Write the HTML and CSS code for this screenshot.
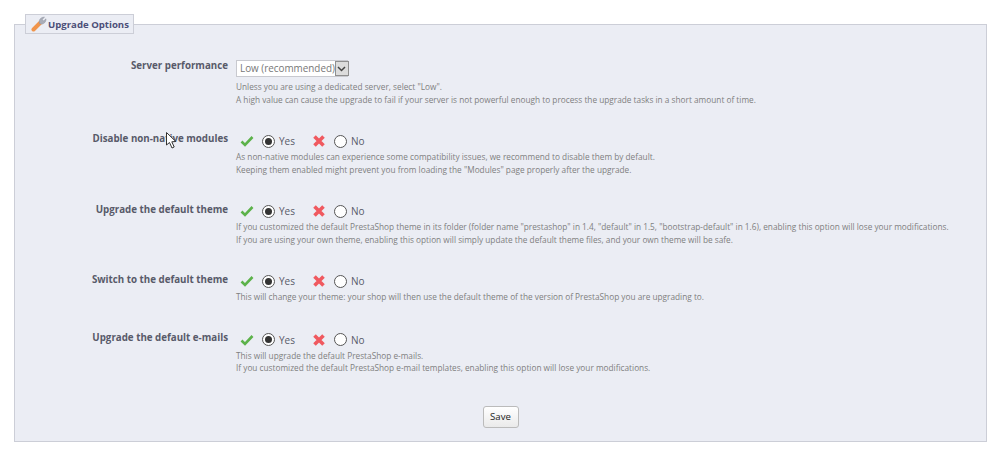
FILE: index.html
```html
<!DOCTYPE html>
<html lang="en">
<head>
    <meta charset="UTF-8">
    <title>Upgrade Options</title>
    <link rel="stylesheet" href="styles.css">
</head>
<body>
    <form class="options-form">
        <fieldset class="options">
            <legend class="options-title">
                <svg class="wrench" viewBox="0 0 16 16" width="16" height="16">
                    <path d="M2.5 13.5 L9 7" stroke="#f0954c" stroke-width="4" stroke-linecap="round"/>
                    <path d="M8.5 7.5 C7.5 3.5 10 1 13.5 1.2 L11.2 3.4 L12.6 5 L15 2.8 C15.2 6 12.5 8.6 9.8 8 Z" fill="#a9adb8" stroke="#8b8f9a" stroke-width=".5"/>
                </svg>
                Upgrade Options
            </legend>

            <div class="row row-select">
                <label class="row-label">Server performance</label>
                <div class="row-field">
                    <div class="select">
                        <span class="select-value">Low (recommended)</span>
                        <span class="select-arrow">
                            <svg viewBox="0 0 9 6" width="9" height="6"><path d="M1 1 L4.5 4.5 L8 1" fill="none" stroke="#444" stroke-width="1.5"/></svg>
                        </span>
                    </div>
                    <p class="help">Unless you are using a dedicated server, select "Low".<br>A high value can cause the upgrade to fail if your server is not powerful enough to process the upgrade tasks in a short amount of time.</p>
                </div>
            </div>

            <div class="row row-modules">
                <label class="row-label">Disable non-native modules</label>
                <div class="row-field">
                    <div class="switch">
                        <svg class="icon-yes" viewBox="0 0 14 14" width="14" height="14"><path d="M1.5 7.5 L5 11 L12.5 3" fill="none" stroke="#5cb24a" stroke-width="2.6"/></svg>
                        <span class="radio radio-on"></span><span class="switch-text">Yes</span>
                        <svg class="icon-no" viewBox="0 0 14 14" width="14" height="14"><path d="M2.5 2.5 L11.5 11.5 M11.5 2.5 L2.5 11.5" fill="none" stroke="#f0595f" stroke-width="3.6"/></svg>
                        <span class="radio"></span><span class="switch-text">No</span>
                    </div>
                    <p class="help">As non-native modules can experience some compatibility issues, we recommend to disable them by default.<br>Keeping them enabled might prevent you from loading the "Modules" page properly after the upgrade.</p>
                </div>
            </div>

            <div class="row row-theme">
                <label class="row-label">Upgrade the default theme</label>
                <div class="row-field">
                    <div class="switch">
                        <svg class="icon-yes" viewBox="0 0 14 14" width="14" height="14"><path d="M1.5 7.5 L5 11 L12.5 3" fill="none" stroke="#5cb24a" stroke-width="2.6"/></svg>
                        <span class="radio radio-on"></span><span class="switch-text">Yes</span>
                        <svg class="icon-no" viewBox="0 0 14 14" width="14" height="14"><path d="M2.5 2.5 L11.5 11.5 M11.5 2.5 L2.5 11.5" fill="none" stroke="#f0595f" stroke-width="3.6"/></svg>
                        <span class="radio"></span><span class="switch-text">No</span>
                    </div>
                    <p class="help">If you customized the default PrestaShop theme in its folder (folder name "prestashop" in 1.4, "default" in 1.5, "bootstrap-default" in 1.6), enabling this option will lose your modifications.<br>If you are using your own theme, enabling this option will simply update the default theme files, and your own theme will be safe.</p>
                </div>
            </div>

            <div class="row row-switch">
                <label class="row-label">Switch to the default theme</label>
                <div class="row-field">
                    <div class="switch">
                        <svg class="icon-yes" viewBox="0 0 14 14" width="14" height="14"><path d="M1.5 7.5 L5 11 L12.5 3" fill="none" stroke="#5cb24a" stroke-width="2.6"/></svg>
                        <span class="radio radio-on"></span><span class="switch-text">Yes</span>
                        <svg class="icon-no" viewBox="0 0 14 14" width="14" height="14"><path d="M2.5 2.5 L11.5 11.5 M11.5 2.5 L2.5 11.5" fill="none" stroke="#f0595f" stroke-width="3.6"/></svg>
                        <span class="radio"></span><span class="switch-text">No</span>
                    </div>
                    <p class="help">This will change your theme: your shop will then use the default theme of the version of PrestaShop you are upgrading to.</p>
                </div>
            </div>

            <div class="row row-mails">
                <label class="row-label">Upgrade the default e-mails</label>
                <div class="row-field">
                    <div class="switch">
                        <svg class="icon-yes" viewBox="0 0 14 14" width="14" height="14"><path d="M1.5 7.5 L5 11 L12.5 3" fill="none" stroke="#5cb24a" stroke-width="2.6"/></svg>
                        <span class="radio radio-on"></span><span class="switch-text">Yes</span>
                        <svg class="icon-no" viewBox="0 0 14 14" width="14" height="14"><path d="M2.5 2.5 L11.5 11.5 M11.5 2.5 L2.5 11.5" fill="none" stroke="#f0595f" stroke-width="3.6"/></svg>
                        <span class="radio"></span><span class="switch-text">No</span>
                    </div>
                    <p class="help">This will upgrade the default PrestaShop e-mails.<br>If you customized the default PrestaShop e-mail templates, enabling this option will lose your modifications.</p>
                </div>
            </div>

            <div class="actions">
                <button type="button" class="save-button">Save</button>
            </div>
        </fieldset>
    </form>

    <!-- mouse pointer caught in the screenshot -->
    <svg class="pointer" viewBox="0 0 11 17" width="11" height="17">
        <path d="M.5 .5 V13 L3.5 10.5 L6 16 L8.2 15 L5.8 9.8 L9.8 9.5 Z" fill="#fff" stroke="#333" stroke-width="1"/>
    </svg>
</body>
</html>
```

FILE: styles.css
```css
body {
    margin: 0;
    background: #fff;
    font-family: "Open Sans", "Liberation Sans", sans-serif;
    font-size: 10px;
    color: #585a69;
}

.options-form {
    padding: 14px 13px 13px 14px;
}

.options {
    margin: 0;
    padding: 0 0 13px;
    background: #ebedf4;
    border: 1px solid #ccced7;
    min-width: 0;
}

.options-title {
    display: flex;
    align-items: center;
    gap: 1px;
    margin-left: 10px;
    padding: 0 5px;
    width: 97px;
    height: 18px;
    background: #ebedf4;
    border: 1px solid #ccced7;
    font-size: 9.6px;
    font-weight: 700;
    color: #4c4f78;
    white-space: nowrap;
}

.wrench {
    flex: none;
}

.row {
    display: flex;
}

.row-select { margin-top: 26px; }
.row-modules { margin-top: 26px; }
.row-theme { margin-top: 26px; }
.row-switch { margin-top: 26px; }
.row-mails { margin-top: 27px; }

.row-label {
    flex: none;
    width: 213px;
    margin-top: -1px;
    text-align: right;
    font-weight: 700;
    font-size: 9.75px;
    line-height: 16px;
    color: #585a69;
}

.row-select .row-label { margin-top: -2px; }
.row-theme .row-label,
.row-switch .row-label { margin-top: 0; }

.row-field {
    margin-left: 8px;
}

.select {
    display: flex;
    align-items: stretch;
    width: 112px;
    height: 17px;
    box-sizing: border-box;
    background: #fff;
    border: 1px solid #c8c9cf;
    font-size: 9.9px;
    line-height: 15px;
    color: #777;
}

.select-value {
    flex: 1;
    padding-left: 3px;
    white-space: nowrap;
}

.select-arrow {
    flex: none;
    width: 14px;
    display: flex;
    align-items: center;
    justify-content: center;
    background: #dcdcdc;
    border: 1px solid #8f8f8f;
    box-sizing: border-box;
}

.switch {
    display: flex;
    align-items: center;
    height: 18px;
    padding-left: 4px;
    font-size: 10px;
    color: #585a69;
}

.radio {
    width: 11px;
    height: 11px;
    margin-left: 8px;
    border: 1px solid #555;
    border-radius: 50%;
    background: #fff;
    display: flex;
    align-items: center;
    justify-content: center;
}

.radio-on::after {
    content: "";
    width: 7px;
    height: 7px;
    border-radius: 50%;
    background: #333;
}

.switch-text {
    margin-left: 4px;
    width: 30px;
}

.icon-no {
    margin-left: 3px;
}

.help {
    margin: 1px 0 0;
    font-size: 8.27px;
    line-height: 12.5px;
    color: #7f7f7f;
}

.row-select .help {
    margin-top: 4px;
}

.actions {
    display: flex;
    justify-content: center;
    margin-top: 31px;
}

.save-button {
    width: 36px;
    height: 22px;
    padding: 0;
    background: linear-gradient(#fff, #eaeaea);
    border: 1px solid #bbb;
    border-radius: 3px;
    font-family: "Open Sans", "Liberation Sans", sans-serif;
    font-size: 9.6px;
    color: #222;
}

.pointer {
    position: absolute;
    left: 166px;
    top: 132px;
}
```
